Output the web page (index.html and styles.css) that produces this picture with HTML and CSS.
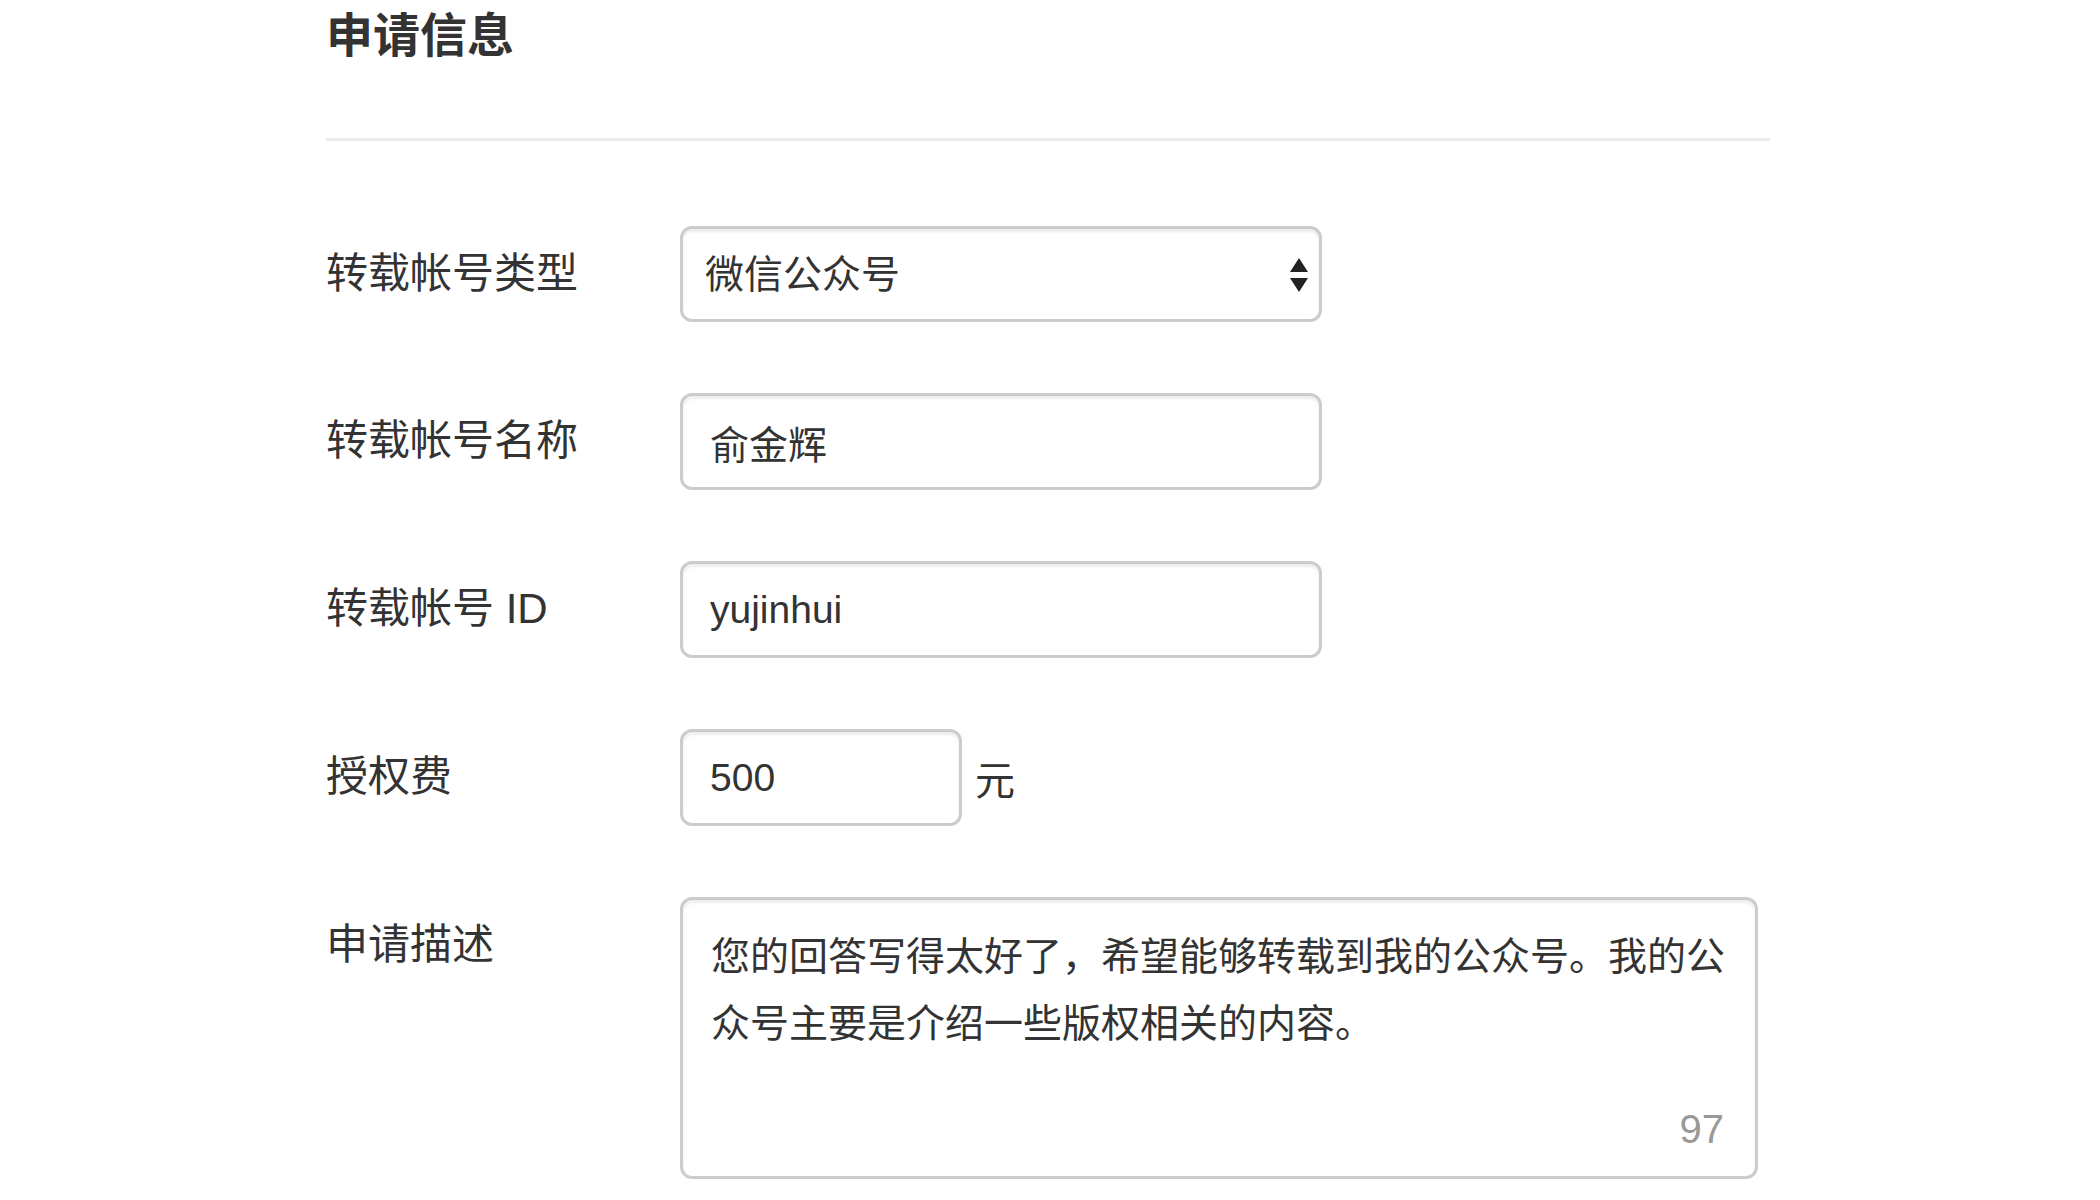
FILE: index.html
```html
<!DOCTYPE html>
<html lang="zh-CN">
<head>
<meta charset="utf-8">
<title>申请信息</title>
<link rel="stylesheet" href="styles.css">
</head>
<body>
<div class="page">
  <div class="section-head">
    <h2 class="title">申请信息</h2>
  </div>
  <form class="form">
    <div class="row">
      <label class="label">转载帐号类型</label>
      <div class="control">
        <div class="select-wrap">
          <select class="field select">
            <option>微信公众号</option>
          </select>
          <svg class="select-arrows" width="18" height="34" viewBox="0 0 18 34" aria-hidden="true">
            <path d="M9 0 L18 14 L0 14 Z" fill="#222"/>
            <path d="M0 20 L18 20 L9 34 Z" fill="#222"/>
          </svg>
        </div>
      </div>
    </div>
    <div class="row">
      <label class="label">转载帐号名称</label>
      <div class="control">
        <input class="field input" type="text" value="俞金辉">
      </div>
    </div>
    <div class="row">
      <label class="label">转载帐号 ID</label>
      <div class="control">
        <input class="field input" type="text" value="yujinhui">
      </div>
    </div>
    <div class="row">
      <label class="label">授权费</label>
      <div class="control inline">
        <input class="field input short" type="text" value="500">
        <span class="unit">元</span>
      </div>
    </div>
    <div class="row">
      <label class="label">申请描述</label>
      <div class="control">
        <div class="textarea-wrap">
          <textarea class="field textarea">您的回答写得太好了，希望能够转载到我的公众号。我的公众号主要是介绍一些版权相关的内容。</textarea>
          <span class="counter">97</span>
        </div>
      </div>
    </div>
  </form>
</div>
</body>
</html>
```

FILE: styles.css
```css
html, body {
  margin: 0;
  padding: 0;
  background: #ffffff;
}

body {
  font-family: "Liberation Sans", "Noto Sans CJK SC", sans-serif;
  color: #333333;
}

.page {
  padding-left: 326px;
  width: 1444px;
}

.section-head {
  border-bottom: 3px solid #ebebeb;
  padding-top: 8px;
  padding-bottom: 74px;
}

.title {
  margin: 0;
  font-size: 47px;
  line-height: 1.2;
  font-weight: 600;
  color: #333333;
}

.form {
  padding-top: 85px;
}

.row {
  display: grid;
  grid-template-columns: 354px 1fr;
  align-items: start;
  margin-bottom: 71px;
}

.label {
  padding-top: 23px;
  font-size: 42px;
  line-height: 1.2;
  color: #333333;
}

.control.inline {
  display: flex;
  align-items: center;
}

.field {
  box-sizing: border-box;
  border: 3px solid #cccccc;
  border-radius: 12px;
  background: #ffffff;
  box-shadow: inset 0 3px 3px rgba(0, 0, 0, 0.075);
  font-family: "Liberation Sans", "Noto Sans CJK SC", sans-serif;
  font-size: 39px;
  color: #333333;
  outline: none;
  margin: 0;
}

.input {
  display: block;
  width: 642px;
  height: 97px;
  padding: 0 27px;
}

.input.short {
  width: 282px;
}

.unit {
  margin-left: 13px;
  font-size: 40px;
  color: #333333;
}

.select-wrap {
  position: relative;
  width: 642px;
}

.select {
  display: block;
  width: 642px;
  height: 96px;
  padding: 0 60px 0 22px;
  -webkit-appearance: none;
  appearance: none;
}

.select-arrows {
  position: absolute;
  right: 14px;
  top: 32px;
  pointer-events: none;
}

.textarea-wrap {
  position: relative;
  width: 1078px;
}

.textarea {
  display: block;
  width: 1078px;
  height: 282px;
  padding: 23px 20px 0 28px;
  line-height: 67px;
  resize: none;
  overflow: hidden;
}

.counter {
  position: absolute;
  right: 34px;
  bottom: 30px;
  font-size: 40px;
  line-height: 1;
  color: #999999;
}
```
